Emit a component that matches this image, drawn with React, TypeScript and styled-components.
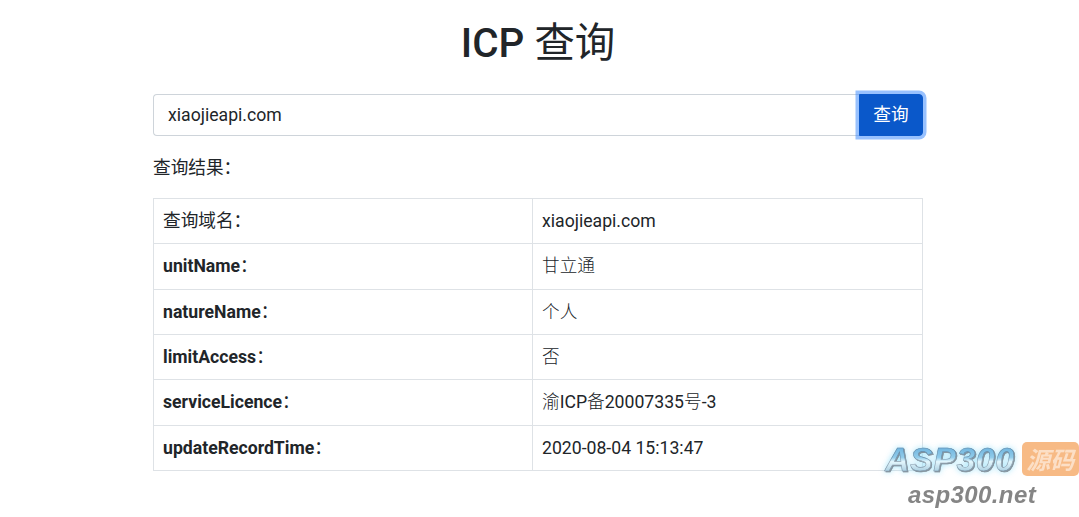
import * as React from 'react';
import styled, { createGlobalStyle } from 'styled-components';

const GlobalStyle = createGlobalStyle`
  html, body {
    margin: 0;
    padding: 0;
    background: #fff;
  }

  body {
    color: #212529;
    font-family: Roboto, "Noto Sans CJK SC", sans-serif;
    font-size: 17.65px;
    line-height: 1.5;
    overflow: hidden;
  }
`;

const Page = styled.div`
  position: relative;
  width: 1079px;
  height: 517px;
  overflow: hidden;
`;

const Main = styled.main`
  width: 770px;
  margin-left: 153px;
`;

const Title = styled.h1`
  margin: 0;
  padding-top: 17px;
  height: 94px;
  box-sizing: border-box;
  font-size: 40.4px;
  font-weight: 500;
  line-height: 53px;
  text-align: center;
`;

// the CJK fallback in the picture has no heavy face, so it stays regular in bold text
const Cjk = styled.span<{ $soft?: boolean }>`
  font-weight: ${props => (props.$soft ? 300 : 400)};
`;

const SearchRow = styled.form`
  display: flex;
  height: 42px;
  margin: 0;
`;

const SearchInput = styled.input`
  flex: 1;
  min-width: 0;
  box-sizing: border-box;
  padding: 0 14px;
  border: 1px solid #ced4da;
  border-right: 0;
  border-radius: 4px 0 0 4px;
  background: #fff;
  color: #212529;
  font: inherit;
  outline: none;
`;

const SearchButton = styled.button`
  position: relative;
  flex: 0 0 64px;
  box-sizing: border-box;
  padding: 0;
  border: 1px solid #0a58ca;
  border-radius: 0 4px 4px 0;
  background: #0a58ca;
  box-shadow: 0 0 0 3.5px rgba(49, 132, 253, 0.5);
  color: #fff;
  font: inherit;
`;

const ResultLabel = styled.p`
  margin: 19px 0 17px;
  height: 26px;
  line-height: 26px;
`;

const ResultTable = styled.table`
  width: 770px;
  table-layout: fixed;
  border-collapse: collapse;
`;

const Row = styled.tr`
  height: 45.33px;
`;

const LabelCell = styled.th`
  box-sizing: border-box;
  width: 379px;
  padding: 0 9px;
  border: 1px solid #dee2e6;
  font-weight: 700;
  text-align: left;
`;

const ValueCell = styled.td`
  box-sizing: border-box;
  padding: 0 9px;
  border: 1px solid #dee2e6;
`;

const Watermark = styled.div`
  position: absolute;
  top: 442px;
  left: 885px;
  width: 194px;
  display: flex;
  flex-direction: column;
  font-family: "Liberation Sans", sans-serif;
  font-style: italic;
  font-weight: 700;
  filter: blur(0.35px);
`;

const WatermarkTop = styled.div`
  display: flex;
  align-items: center;
  gap: 7px;
`;

const BrandName = styled.span`
  font-size: 34px;
  line-height: 34px;
  letter-spacing: 0.5px;
  background: linear-gradient(180deg, #5fa8d8 0%, #8fcbea 45%, #e4f7fd 58%, #8fbcd4 100%);
  -webkit-background-clip: text;
  background-clip: text;
  color: transparent;
  -webkit-text-stroke: 0.6px rgba(90, 105, 125, 0.6);
  filter: drop-shadow(1px 1px 0 rgba(110, 120, 130, 0.8)) drop-shadow(0 0 3px rgba(150, 225, 250, 0.85));
`;

const BrandTag = styled.span`
  width: 57px;
  height: 34px;
  border-radius: 5px;
  background: #f7ba85;
  color: #fcdfc6;
  font-family: "Noto Sans CJK SC", sans-serif;
  font-size: 24px;
  line-height: 33px;
  text-align: center;
`;

const BrandUrl = styled.span`
  margin: 5px 0 0 23px;
  color: #858585;
  font-size: 24px;
  line-height: 28px;
  letter-spacing: 0.4px;
`;

const rows: [string, React.ReactNode][] = [
  ['unitName', <Cjk $soft>甘立通</Cjk>],
  ['natureName', <Cjk $soft>个人</Cjk>],
  ['limitAccess', <Cjk $soft>否</Cjk>],
  ['serviceLicence', <><Cjk $soft>渝</Cjk>ICP<Cjk $soft>备</Cjk>20007335<Cjk $soft>号</Cjk>-3</>],
  ['updateRecordTime', '2020-08-04 15:13:47'],
];

export default function App() {
  return (
    <Page>
      <GlobalStyle />
      <Main>
        <Title>ICP <Cjk>查询</Cjk></Title>
        <SearchRow onSubmit={event => event.preventDefault()}>
          <SearchInput defaultValue="xiaojieapi.com" />
          <SearchButton type="submit">查询</SearchButton>
        </SearchRow>
        <ResultLabel>查询结果：</ResultLabel>
        <ResultTable>
          <tbody>
            <Row>
              <LabelCell><Cjk>查询域名：</Cjk></LabelCell>
              <ValueCell>xiaojieapi.com</ValueCell>
            </Row>
            {rows.map(([label, value]) => (
              <Row key={label}>
                <LabelCell>{label}<Cjk>：</Cjk></LabelCell>
                <ValueCell>{value}</ValueCell>
              </Row>
            ))}
          </tbody>
        </ResultTable>
      </Main>
      <Watermark>
        <WatermarkTop>
          <BrandName>ASP300</BrandName>
          <BrandTag>源码</BrandTag>
        </WatermarkTop>
        <BrandUrl>asp300.net</BrandUrl>
      </Watermark>
    </Page>
  );
}
